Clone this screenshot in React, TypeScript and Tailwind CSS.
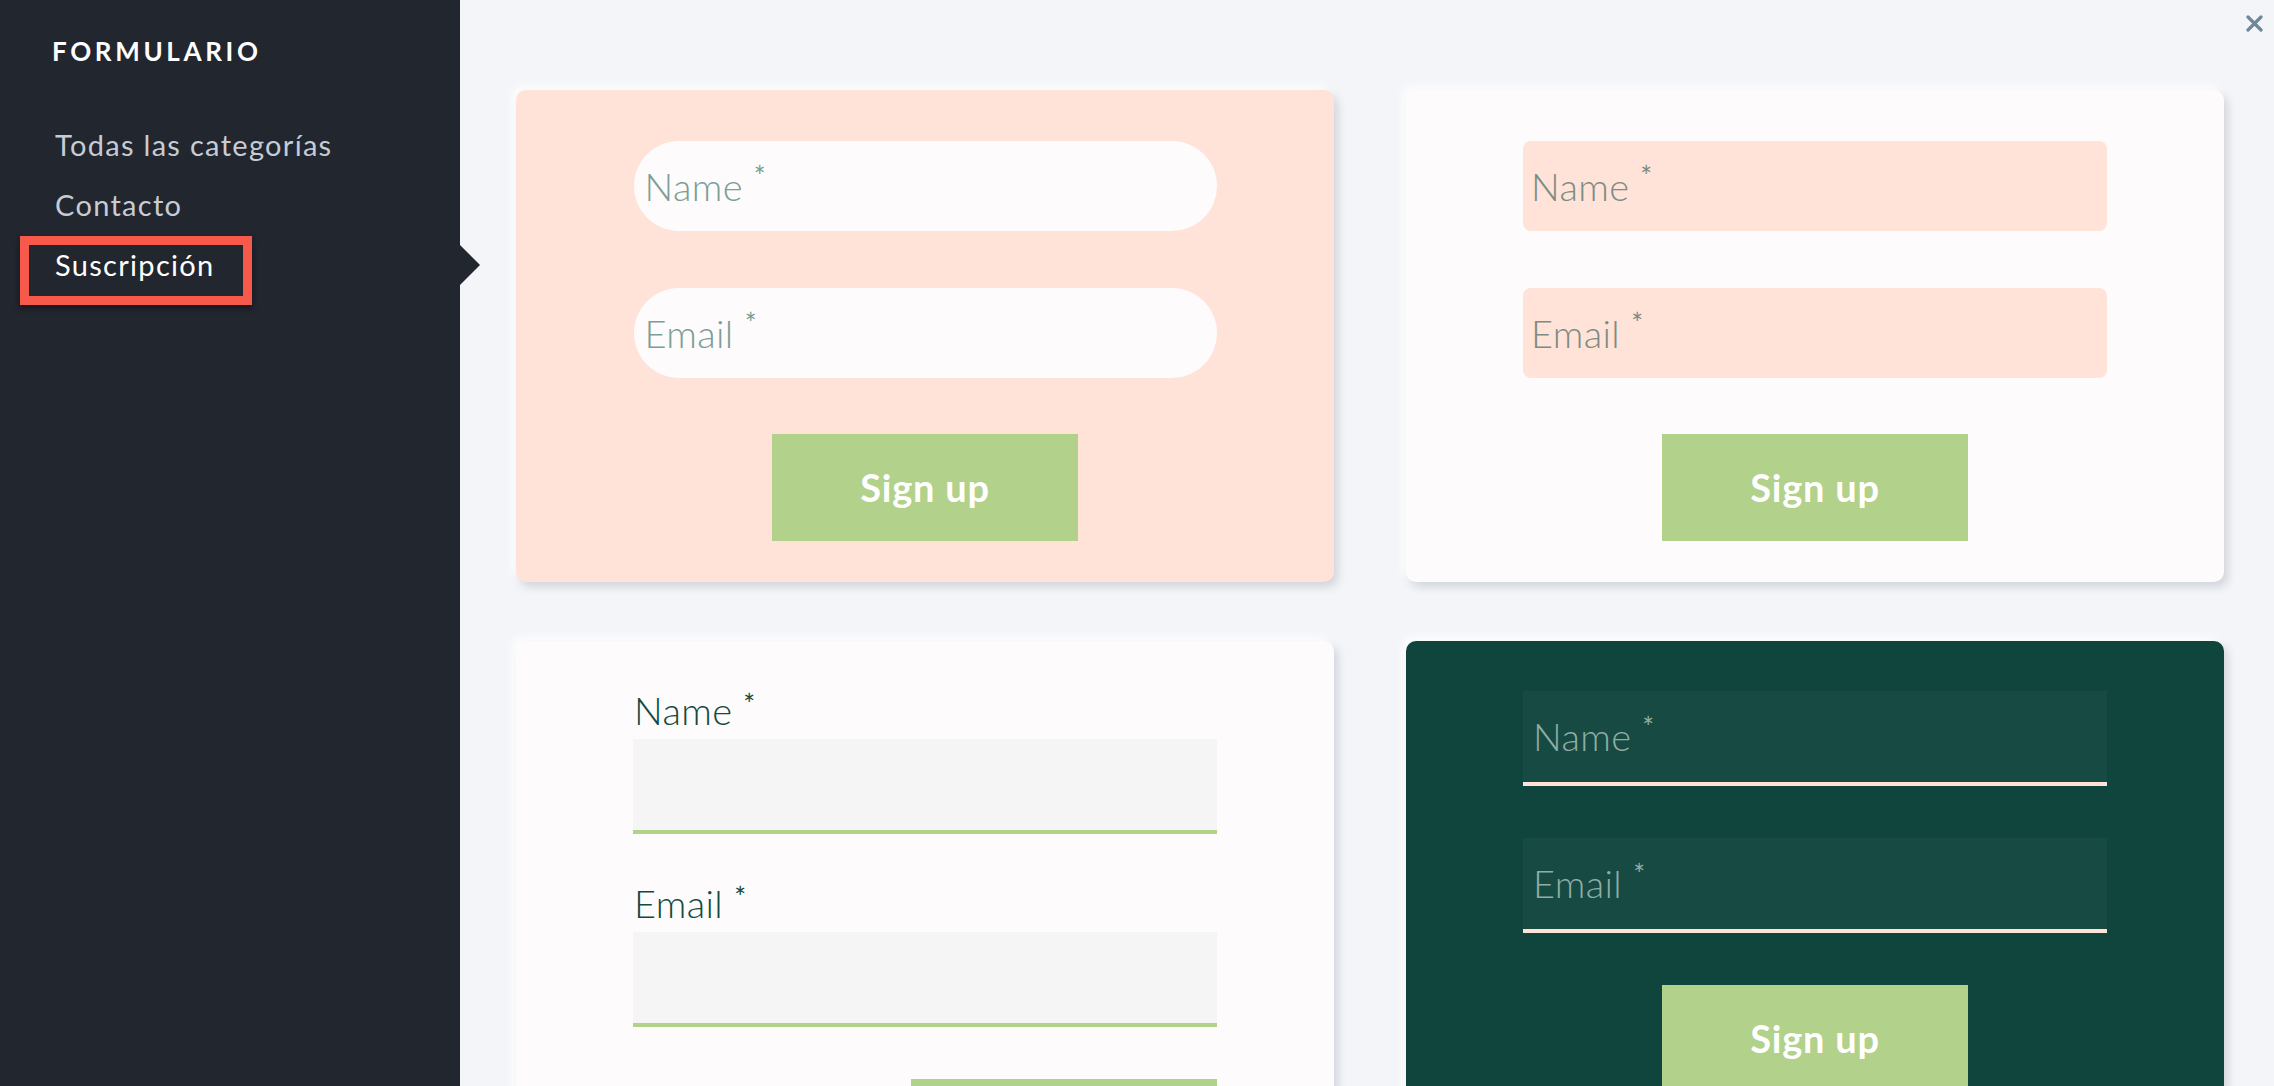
const sans = "font-['Lato','Noto_Sans',sans-serif]";

const navItems = ["Todas las categorías", "Contacto", "Suscripción"];

const Sidebar = () => (
  <aside className={`relative z-10 w-[460px] shrink-0 bg-[#21262f] ${sans}`}>
    <h1 className="pl-[52px] pt-[36px] text-[26px] font-bold tracking-[0.14em] text-white leading-[1.2]">
      FORMULARIO
    </h1>
    <nav className="mt-[60px] flex flex-col pl-[55px]">
      {navItems.map((item, i) => (
        <a
          key={item}
          className={`h-[60px] text-[29px] tracking-[0.045em] leading-[35px] ${
            i === navItems.length - 1 ? "text-white" : "text-[#c7ccd4]"
          }`}
        >
          {item}
        </a>
      ))}
    </nav>
    {/* highlight around active item */}
    <div className="absolute left-[20px] top-[236px] h-[69px] w-[232px] border-[9px] border-[#f75a4b] shadow-[0_3px_6px_rgba(0,0,0,0.45)]" />
    {/* active pointer */}
    <div className="absolute left-[460px] top-[245px] h-0 w-0 border-y-[20px] border-l-[20px] border-y-transparent border-l-[#21262f]" />
  </aside>
);

const Star = () => (
  <span className="relative -top-[10px] ml-[11px] text-[28px] font-normal leading-none">*</span>
);

const SignUp = ({ className = "" }: { className?: string }) => (
  <button
    className={`h-[107px] w-[306px] shrink-0 bg-[#b2d18b] text-[38px] font-bold tracking-[0.02em] text-white ${className}`}
  >
    Sign up
  </button>
);

const Card = ({ className, children }: { className: string; children: React.ReactNode }) => (
  <div
    className={`flex flex-col items-center rounded-[10px] shadow-[4px_5px_8px_rgba(60,70,90,0.18),-4px_-4px_8px_rgba(255,255,255,0.9)] ${className}`}
  >
    {children}
  </div>
);

export default function App() {
  return (
    <div className="flex h-[1086px] w-full overflow-hidden">
      <Sidebar />
      <main className={`relative flex-1 bg-[#f3f5f8] pl-[56px] pt-[90px] ${sans}`}>
        <button className="absolute right-[11px] top-[15px]">
          <svg width="17" height="17" viewBox="0 0 17 17">
            <path d="M2 2 15 15M15 2 2 15" stroke="#71879a" strokeWidth="3.2" strokeLinecap="round" />
          </svg>
        </button>

        <div className="grid grid-cols-[818px_818px] gap-x-[72px] gap-y-[59px] font-light text-[38px] tracking-[0.01em]">
          {/* pill inputs */}
          <Card className="bg-[#ffe3d9] pt-[51px] pb-[41px]">
            <div className="flex h-[90px] w-[583px] items-center rounded-full bg-[#fdfbfb] pl-[11px] text-[#7b9e95]">
              Name<Star />
            </div>
            <div className="mt-[57px] flex h-[90px] w-[583px] items-center rounded-full bg-[#fdfbfb] pl-[11px] text-[#7b9e95]">
              Email<Star />
            </div>
            <SignUp className="mt-[56px]" />
          </Card>

          {/* peach inputs */}
          <Card className="bg-[#fdfbfb] pt-[51px] pb-[41px]">
            <div className="flex h-[90px] w-[584px] items-center rounded-[8px] bg-[#ffe3d9] pl-[8px] text-[#7d8c83]">
              Name<Star />
            </div>
            <div className="mt-[57px] flex h-[90px] w-[584px] items-center rounded-[8px] bg-[#ffe3d9] pl-[8px] text-[#7d8c83]">
              Email<Star />
            </div>
            <SignUp className="mt-[56px]" />
          </Card>

          {/* labelled inputs */}
          <Card className="bg-[#fdfbfb] pt-[47px] pb-[41px]">
            <div className="flex w-[584px] flex-col">
              <label className="pl-[1px] leading-[45px] text-[#134a3f]">
                Name<Star />
              </label>
              <div className="mt-[6px] h-[95px] border-b-4 border-[#b2d18b] bg-[#f5f5f5]" />
              <label className="mt-[47px] pl-[1px] leading-[45px] text-[#134a3f]">
                Email<Star />
              </label>
              <div className="mt-[6px] h-[95px] border-b-4 border-[#b2d18b] bg-[#f5f5f5]" />
              <SignUp className="mt-[52px] self-end" />
            </div>
          </Card>

          {/* dark card */}
          <Card className="bg-[#0f453d] pt-[50px] pb-[41px]">
            <div className="flex h-[95px] w-[584px] items-center border-b-4 border-[#ffe3d9] bg-[#164a42] pl-[10px] text-[#8fada4]">
              Name<Star />
            </div>
            <div className="mt-[52px] flex h-[95px] w-[584px] items-center border-b-4 border-[#ffe3d9] bg-[#164a42] pl-[10px] text-[#8fada4]">
              Email<Star />
            </div>
            <SignUp className="mt-[52px]" />
          </Card>
        </div>
      </main>
    </div>
  );
}
